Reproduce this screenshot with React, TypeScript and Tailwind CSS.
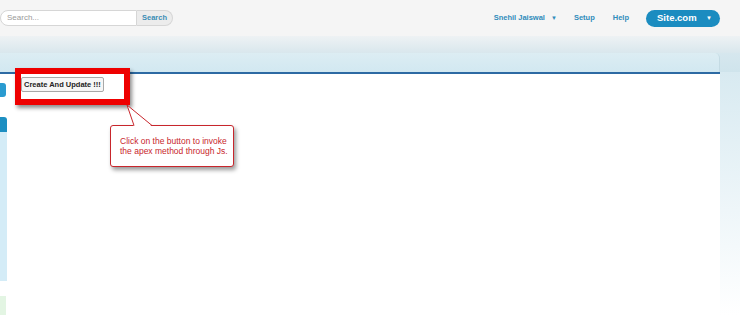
import React from 'react';

const App: React.FC = () => {
  return (
    <div className="w-[740px] h-[315px] overflow-hidden relative bg-white font-['Liberation_Sans',Arial,sans-serif]">
      {/* top header */}
      <div className="h-[36px] bg-[#f5f5f5] flex items-center justify-between pr-[20px]">
        <div className="flex items-center">
          <div className="w-[137px] h-[16px] bg-white border border-[#d6d6d6] rounded-l-[8px] flex items-center pl-[6px] text-[8px] text-[#9a9a9a]">
            Search...
          </div>
          <div className="w-[36px] h-[16px] bg-[#ececec] border border-[#d6d6d6] border-l-0 rounded-r-[8px] flex items-center justify-center text-[7.5px] font-bold text-[#3a8cb5]">
            Search
          </div>
        </div>
        <div className="flex items-center text-[7.5px] font-bold text-[#2f8cbb]">
          <span>Snehil Jaiswal</span>
          <span className="ml-[6px] text-[6px]">▼</span>
          <span className="ml-[17px]">Setup</span>
          <span className="ml-[18px]">Help</span>
          <div className="ml-[17px] w-[74px] h-[17px] rounded-[9px] bg-[#1b8cc0] flex items-center justify-between pl-[11px] pr-[8px] text-white text-[9.5px]">
            <span>Site.com</span>
            <span className="text-[6px]">▼</span>
          </div>
        </div>
      </div>

      {/* gradient band + tab bar */}
      <div className="h-[17px] bg-gradient-to-b from-[#eef2f4] to-[#d9e7ed]" />
      <div className="flex h-[19px] bg-[#d6e8ef]">
        <div className="w-[720px] bg-gradient-to-b from-[#dcedf3] to-[#d2e8f1] rounded-tr-[5px] border-r border-[#c4dbe4]" />
        <div className="flex-1 bg-gradient-to-b from-[#d6e7ee] to-[#cfe4ec]" />
      </div>

      {/* body */}
      <div className="flex h-[243px]">
        <div className="w-[720px] border-t-2 border-[#2d6aa3] bg-white flex">
          <div className="w-[8px] flex flex-col">
            <div className="mt-[9px] w-[6px] h-[14px] bg-[#2a9bd0] rounded-r-[3px]" />
            <div className="mt-[20px] w-[7px] h-[16px] bg-[#1d8fc2] rounded-tr-[3px]" />
            <div className="w-[7px] h-[152px] bg-[#d4ecf7]" />
            <div className="mt-[15px] w-[6px] h-[20px] bg-[#e3f5e3]" />
          </div>
          <div className="flex-1 flex flex-col items-start pl-[13px] pt-[3px]">
            <button className="h-[15px] px-[2px] border border-[#a8a8a8] rounded-[2px] bg-[#f6f6f6] text-[7.5px] leading-[13px] font-bold text-[#222]">
              Create And Update !!!
            </button>
          </div>
        </div>
        <div className="flex-1 bg-gradient-to-b from-[#d8eaf1] to-white" />
      </div>

      {/* annotation: red highlight box */}
      <div className="absolute left-[15px] top-[68px] w-[115px] h-[37px] border-[6px] border-[#ee0000] shadow-[2px_3px_4px_rgba(0,0,0,0.45)]" />

      {/* annotation: callout */}
      <div className="absolute left-[110px] top-[125px] w-[124px] h-[42px] bg-white border border-[#c8262c] rounded-[3px] shadow-[2px_3px_4px_rgba(0,0,0,0.4)] flex flex-col justify-center pl-[9px] text-[8.5px] leading-[10px] text-[#c8262c]">
        <span>Click on the button to invoke</span>
        <span>the apex method through Js.</span>
      </div>
      <svg className="absolute left-[120px] top-[100px]" width="40" height="28" viewBox="0 0 40 28">
        <path d="M14 26.5 L7 5 L32 26.5 Z" fill="white" />
        <path d="M14 25.5 L7 5 L32 25.5" fill="none" stroke="#c8262c" strokeWidth="1" />
      </svg>
    </div>
  );
};

export default App;
